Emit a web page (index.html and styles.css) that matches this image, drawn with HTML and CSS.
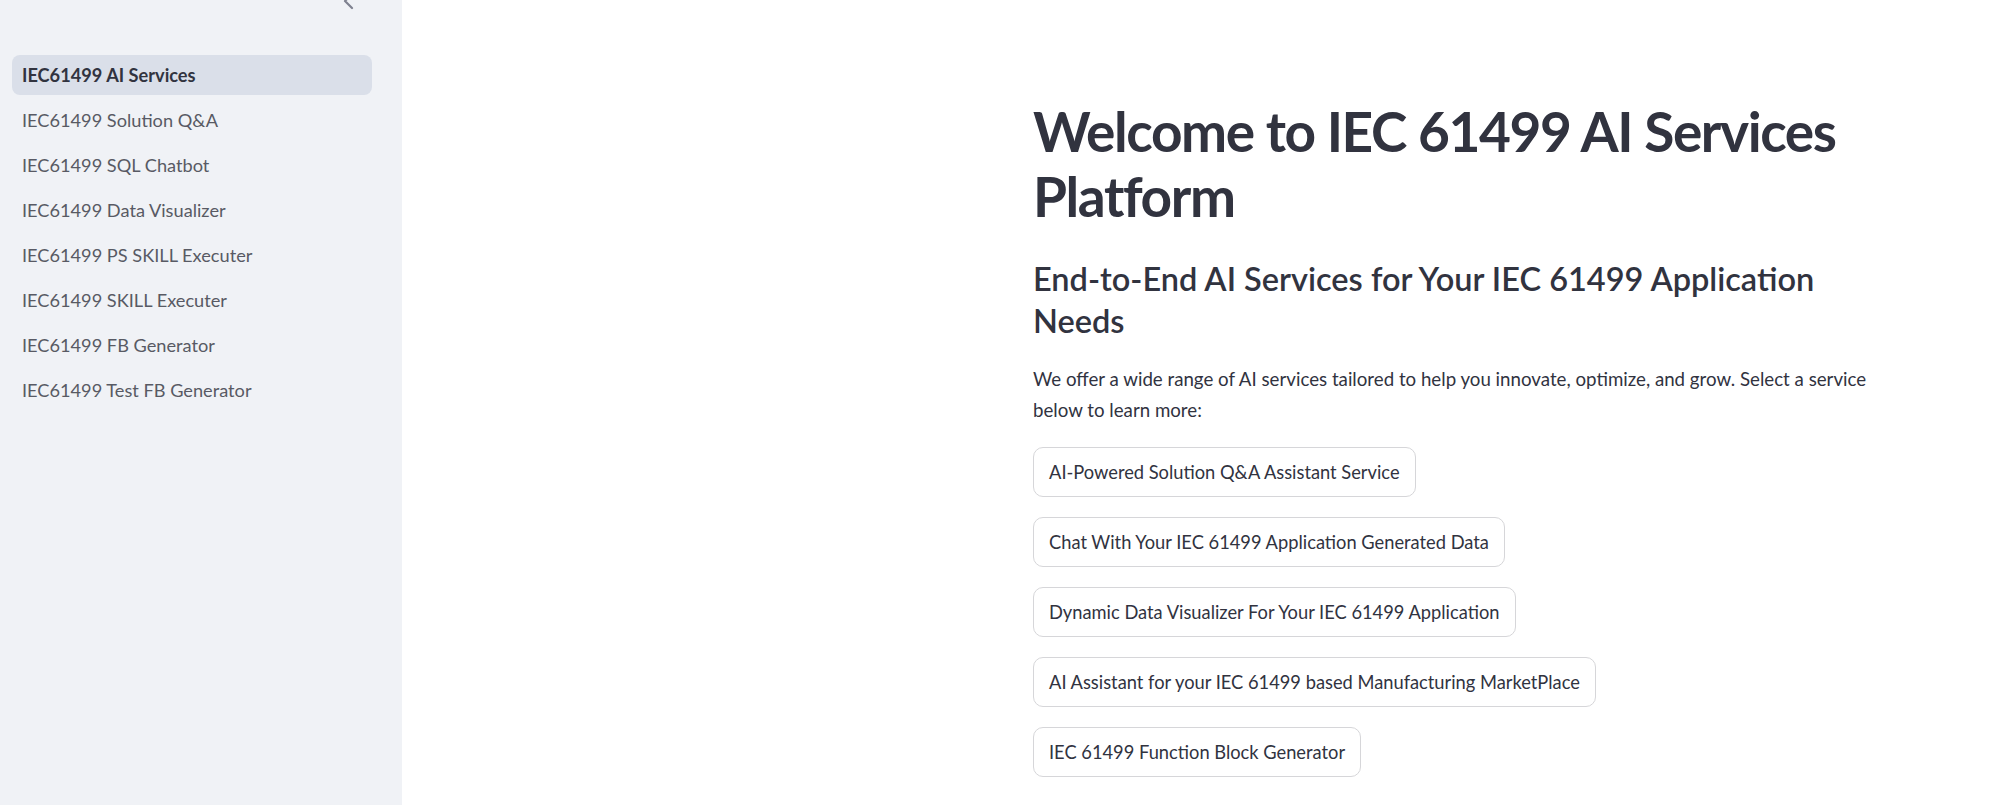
FILE: index.html
```html
<!DOCTYPE html>
<html lang="en">
<head>
<meta charset="utf-8">
<title>IEC 61499 AI Services</title>
<link rel="stylesheet" href="styles.css">
</head>
<body>
<div class="app">
  <aside class="sidebar">
    <div class="sidebar-header">
      <svg class="collapse" width="24" height="24" viewBox="0 0 24 24" aria-hidden="true">
        <path d="M15 5 L8 12 L15 19" fill="none" stroke="currentColor" stroke-width="2.2" stroke-linecap="round" stroke-linejoin="round"/>
      </svg>
    </div>
    <nav class="nav">
      <a class="nav-item active" href="#">IEC61499 AI Services</a>
      <a class="nav-item" href="#">IEC61499 Solution Q&amp;A</a>
      <a class="nav-item" href="#">IEC61499 SQL Chatbot</a>
      <a class="nav-item" href="#">IEC61499 Data Visualizer</a>
      <a class="nav-item" href="#">IEC61499 PS SKILL Executer</a>
      <a class="nav-item" href="#">IEC61499 SKILL Executer</a>
      <a class="nav-item" href="#">IEC61499 FB Generator</a>
      <a class="nav-item" href="#">IEC61499 Test FB Generator</a>
    </nav>
  </aside>
  <main class="main">
    <div class="block">
      <h1 class="title">Welcome to IEC 61499 AI Services Platform</h1>
      <h2 class="subtitle">End-to-End AI Services for Your IEC 61499 Application Needs</h2>
      <p class="intro">We offer a wide range of AI services tailored to help you innovate, optimize, and grow. Select a service below to learn more:</p>
      <div class="buttons">
        <button class="btn" type="button">AI-Powered Solution Q&amp;A Assistant Service</button>
        <button class="btn" type="button">Chat With Your IEC 61499 Application Generated Data</button>
        <button class="btn" type="button">Dynamic Data Visualizer For Your IEC 61499 Application</button>
        <button class="btn" type="button">AI Assistant for your IEC 61499 based Manufacturing MarketPlace</button>
        <button class="btn" type="button">IEC 61499 Function Block Generator</button>
      </div>
    </div>
  </main>
</div>
</body>
</html>
```

FILE: styles.css
```css
* { box-sizing: border-box; }

html, body {
  margin: 0;
  padding: 0;
  height: 100%;
  background: #ffffff;
  font-family: "Lato", "Noto Sans", sans-serif;
  color: #31333f;
}

.app {
  display: flex;
  min-height: 100vh;
  overflow: hidden;
}

.sidebar {
  flex: 0 0 402px;
  background: #f0f2f6;
  min-height: 100vh;
}

.sidebar-header {
  height: 13px;
  display: flex;
  justify-content: flex-end;
  align-items: flex-end;
  padding-right: 41px;
}

.collapse {
  flex: none;
  color: #7f8290;
}

.nav {
  display: flex;
  flex-direction: column;
  gap: 5px;
  margin-top: 42px;
  padding: 0 30px 0 12px;
}

.nav-item {
  display: flex;
  align-items: center;
  height: 40px;
  padding: 0 10px;
  border-radius: 8px;
  font-size: 18.2px;
  color: #585a64;
  text-decoration: none;
}

.nav-item.active {
  background: #dadfe9;
  color: #31333f;
  font-weight: 700;
}

.main {
  flex: 1;
  padding-left: 631px;
}

.block {
  width: 860px;
  padding-top: 99px;
}

.title {
  margin: 0;
  font-size: 55px;
  line-height: 65px;
  font-weight: 700;
  letter-spacing: -1.4px;
  color: #31333f;
}

.subtitle {
  margin: 29px 0 0;
  font-size: 32.5px;
  line-height: 42px;
  font-weight: 600;
  color: #31333f;
}

.intro {
  margin: 22px 0 0;
  font-size: 18.7px;
  line-height: 30.5px;
}

.buttons {
  margin-top: 22px;
  display: flex;
  flex-direction: column;
  align-items: flex-start;
  gap: 20px;
}

.btn {
  height: 50px;
  padding: 0 15px;
  background: #ffffff;
  border: 1px solid #d6d6d9;
  border-radius: 10px;
  font-family: inherit;
  font-size: 18.3px;
  color: #31333f;
  cursor: pointer;
}
```
